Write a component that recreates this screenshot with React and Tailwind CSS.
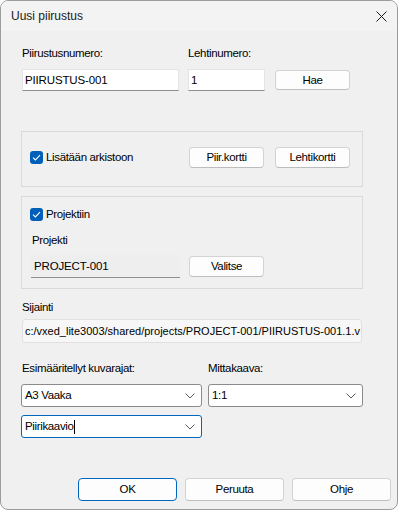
const Check = () => (
  <span className="w-[13px] h-[13px] rounded-[3px] bg-[#005fb8] flex items-center justify-center shrink-0">
    <svg width="9" height="7" viewBox="0 0 9 7" fill="none">
      <path d="M1 3.6 L3.4 5.9 L8 1.2" stroke="white" strokeWidth="1.1" />
    </svg>
  </span>
);

const Chevron = () => (
  <svg width="10" height="6" viewBox="0 0 10 6" fill="none" className="shrink-0">
    <path d="M0.5 0.5 L5 5 L9.5 0.5" stroke="#5a5a5a" strokeWidth="1" />
  </svg>
);

const Btn = ({ children, className = "" }) => (
  <div
    className={
      "flex items-center justify-center bg-[#fdfdfd] border border-[#d3d3d3] border-b-[#bdbdbd] rounded-[4px] text-black " +
      className
    }
  >
    {children}
  </div>
);

export default function App() {
  return (
    <div className="w-[398px] h-[510px] bg-white font-['Liberation_Sans',Arial,sans-serif] text-[11.5px] tracking-[-0.35px] text-black leading-[15px]">
      <div className="h-full rounded-[8px] border border-[#9c9c9c] bg-[#f0f0f0] overflow-hidden flex flex-col">
        {/* Title bar */}
        <div className="h-[30px] bg-[#f3f3f3] flex items-center justify-between pl-[10px] pr-[9px] shrink-0">
          <span className="text-[12px] tracking-normal text-[#1a1a1a] mt-[1px]">Uusi piirustus</span>
          <svg width="11" height="11" viewBox="0 0 11 11" fill="none" className="mr-[1px]">
            <path d="M0.5 0.5 L10.5 10.5 M10.5 0.5 L0.5 10.5" stroke="#1a1a1a" strokeWidth="1" />
          </svg>
        </div>

        {/* Body */}
        <div className="flex-1 flex flex-col pl-[20px]">
          {/* Row 1 labels */}
          <div className="mt-[15px] h-[15px] flex">
            <span className="w-[167px] pl-[1px]">Piirustusnumero:</span>
            <span>Lehtinumero:</span>
          </div>
          {/* Row 1 inputs */}
          <div className="mt-[8px] flex items-center">
            <div className="ml-[1px] w-[157px] h-[22px] bg-white border border-[#e4e4e4] border-b-[#8f8f8f] flex items-center pl-[2px] tracking-[-0.15px]">
              PIIRUSTUS-001
            </div>
            <div className="ml-[9px] w-[77px] h-[22px] bg-white border border-[#e4e4e4] border-b-[#8f8f8f] flex items-center pl-[2px]">
              1
            </div>
            <Btn className="ml-[10px] w-[75px] h-[20px]">Hae</Btn>
          </div>

          {/* Group 1 */}
          <div className="mt-[40px] w-[342px] h-[56px] border border-[#dadada] pl-[8px] pt-[15px]">
            <div className="flex items-center h-[21px]">
              <div className="w-[159px] flex items-center gap-[3px]">
                <Check />
                <span>Lisätään arkistoon</span>
              </div>
              <Btn className="w-[75px] h-[21px]">Piir.kortti</Btn>
              <Btn className="ml-[11px] w-[75px] h-[21px]">Lehtikortti</Btn>
            </div>
          </div>

          {/* Group 2 */}
          <div className="mt-[9px] w-[342px] h-[93px] border border-[#dadada] pl-[8px] pt-[9px] flex flex-col">
            <div className="flex items-center h-[17px] gap-[3px]">
              <Check />
              <span>Projektiin</span>
            </div>
            <div className="mt-[10px] h-[15px] pl-[2px]">Projekti</div>
            <div className="mt-[7px] flex items-center">
              <div className="ml-[1px] w-[149px] h-[23px] bg-[#eeeeee] border-b border-[#8f8f8f] flex items-center pl-[3px] tracking-[-0.15px]">
                PROJECT-001
              </div>
              <Btn className="ml-[9px] w-[75px] h-[21px]">Valitse</Btn>
            </div>
          </div>

          {/* Sijainti */}
          <div className="mt-[11px] h-[15px] pl-[1px]">Sijainti</div>
          <div className="mt-[4px] ml-[1px] w-[340px] h-[24px] bg-[#f7f7f7] border border-[#e0e0e0] rounded-[3px] flex items-center pl-[2px] whitespace-nowrap overflow-hidden text-[11px] tracking-normal">
            c:/vxed_lite3003/shared/projects/PROJECT-001/PIIRUSTUS-001.1.v
          </div>

          {/* Combos */}
          <div className="mt-[18px] h-[15px] flex">
            <span className="w-[187px] pl-[1px]">Esimääritellyt kuvarajat:</span>
            <span>Mittakaava:</span>
          </div>
          <div className="mt-[8px] flex">
            <div className="w-[181px] h-[23px] bg-white border border-[#8b8b8b] rounded-[3px] flex items-center justify-between pl-[3px] pr-[6px]">
              <span>A3 Vaaka</span>
              <Chevron />
            </div>
            <div className="ml-[6px] w-[155px] h-[23px] bg-white border border-[#8b8b8b] rounded-[3px] flex items-center justify-between pl-[3px] pr-[6px]">
              <span>1:1</span>
              <Chevron />
            </div>
          </div>
          <div className="mt-[8px] w-[181px] h-[23px] bg-white border border-[#0067c0] rounded-[3px] flex items-center justify-between pl-[3px] pr-[6px]">
            <span className="flex items-center">
              Piirikaavio
              <span className="w-[1px] h-[14px] bg-black" />
            </span>
            <Chevron />
          </div>

          {/* Buttons */}
          <div className="mt-auto mb-[8px] flex justify-end gap-[8px] pr-[6px]">
            <Btn className="w-[99px] h-[23px] !border-[#0067c0]">OK</Btn>
            <Btn className="w-[99px] h-[23px]">Peruuta</Btn>
            <Btn className="w-[99px] h-[23px]">Ohje</Btn>
          </div>
        </div>
      </div>
    </div>
  );
}
